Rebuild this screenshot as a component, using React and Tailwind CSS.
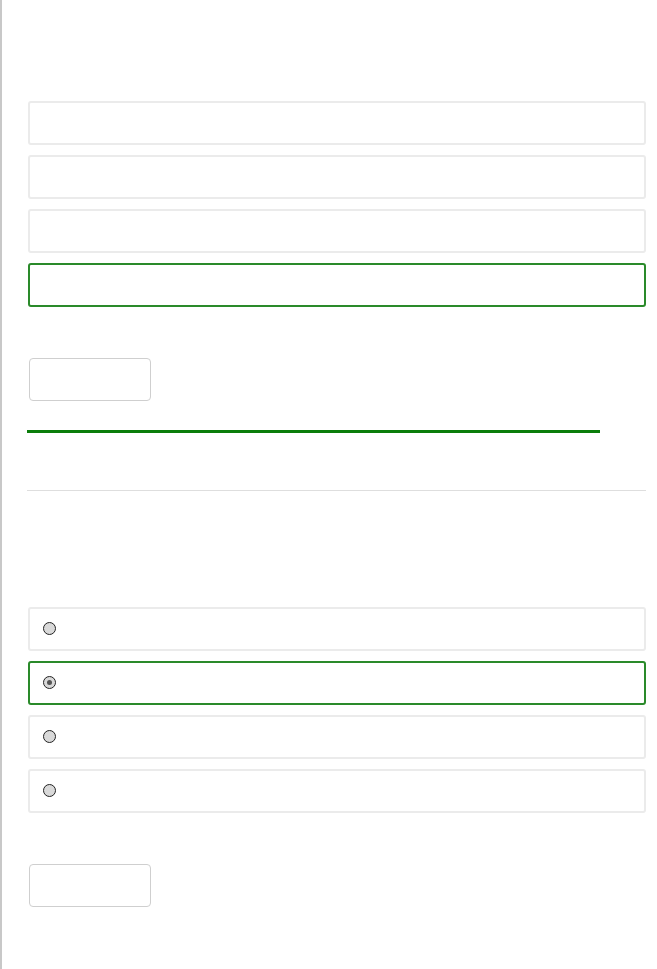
import React from 'react';

const Box = ({ active, children }) => (
    <div
        className={`h-[44px] rounded-[3px] border-2 flex items-center pl-[13px] ${
            active ? 'border-[#2a8a2a]' : 'border-[#ebebeb]'
        }`}
    >
        {children}
    </div>
);

const Radio = ({ checked }) => (
    <span className="w-[13px] h-[13px] rounded-full border border-[#222] bg-[#d9d9d9] flex items-center justify-center -mt-[1px]">
        {checked && <span className="w-[5px] h-[5px] rounded-full bg-[#555]" />}
    </span>
);

const App = () => {
    return (
        <div className="min-h-[969px] w-[657px] border-l-2 border-[#c8c8c8] bg-white font-['Liberation_Sans',sans-serif]">
            <div className="pl-[26px] pr-[11px] pt-[101px]">
                <div className="flex flex-col gap-[10px]">
                    <Box />
                    <Box />
                    <Box />
                    <Box active />
                </div>

                <div className="mt-[51px] w-[122px] h-[43px] rounded-[4px] border border-[#cfcfcf] ml-[1px]" />

                <div className="mt-[29px] w-[573px] h-[3px] bg-[#0b7d0b] -ml-[1px]" />

                <div className="mt-[57px] h-px bg-[#dedede] -ml-[1px]" />

                <div className="mt-[116px] flex flex-col gap-[10px]">
                    <Box><Radio /></Box>
                    <Box active><Radio checked /></Box>
                    <Box><Radio /></Box>
                    <Box><Radio /></Box>
                </div>

                <div className="mt-[51px] w-[122px] h-[43px] rounded-[4px] border border-[#cfcfcf] ml-[1px]" />
            </div>
        </div>
    );
};

export default App;
